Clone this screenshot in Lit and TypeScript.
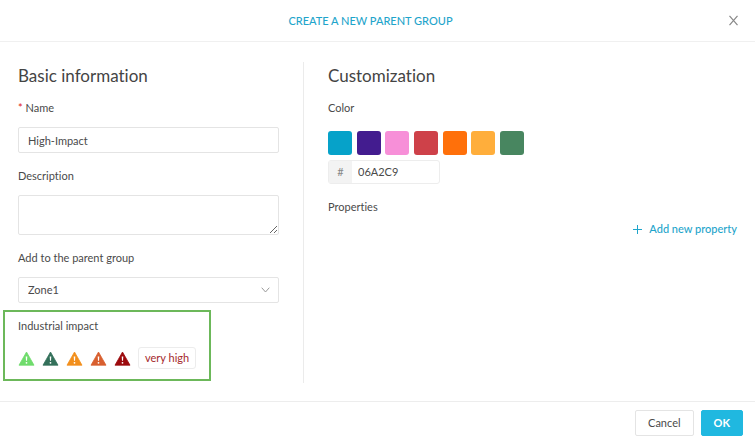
import { LitElement, html, css, svg } from "lit";
import { customElement, state } from "lit/decorators.js";
import { styleMap } from "lit/directives/style-map.js";

const SWATCHES = [
  { name: "Blue", hex: "06A2C9" },
  { name: "Indigo", hex: "431C8F" },
  { name: "Pink", hex: "F78FD8" },
  { name: "Red", hex: "CE4149" },
  { name: "Orange", hex: "FF700A" },
  { name: "Amber", hex: "FFAE3B" },
  { name: "Green", hex: "488660" },
];

const IMPACTS = [
  { name: "very low", color: "#6fdc6c" },
  { name: "low", color: "#33705a" },
  { name: "medium", color: "#f28f1c" },
  { name: "high", color: "#d85f2f" },
  { name: "very high", color: "#9c0a0d" },
];

const warning = svg`
  <path d="M8.5 1 L16 14.2 H1 Z" fill="currentColor" stroke="currentColor" stroke-width="0.8" stroke-linejoin="round"/>
  <path d="M7.7 5.6 H9.3 L9 9.8 H8 Z" fill="#fff"/>
  <circle cx="8.5" cy="11.8" r="0.9" fill="#fff"/>`;

@customElement("app-root")
export class AppRoot extends LitElement {
  @state() private color = "06A2C9";
  @state() private impact = "very high";

  static styles = css`
    :host {
      display: flex;
      flex-direction: column;
      min-height: 100vh;
      background: #fff;
      color: #4a4a4a;
      font: 11px/18px Lato, "Liberation Sans", sans-serif;
      font-variant-ligatures: none;
    }
    *, *::before, *::after { box-sizing: border-box; }
    button, input, textarea, select { font: inherit; color: inherit; margin: 0; }
    button { cursor: pointer; padding: 0; }
    .header {
      display: grid;
      grid-template-columns: 1fr auto 1fr;
      align-items: center;
      height: 42px;
      padding: 0 16px;
      border-bottom: 1px solid #f0f0f0;
    }
    .title {
      grid-column: 2;
      margin: 0;
      padding-right: 14px;
      font-size: 11px;
      line-height: 18px;
      font-weight: 500;
      color: #1fa5cb;
    }
    .close {
      justify-self: end;
      display: flex;
      border: 0;
      background: none;
      color: #888;
    }
    .body {
      flex: 1;
      display: grid;
      grid-template-columns: 286fr 433fr;
      padding: 20px 18px 18px;
    }
    .basic { padding-right: 24px; border-right: 1px solid #ebebeb; }
    .custom { padding-left: 24px; }
    .heading {
      margin: 2px 0 11px;
      font-size: 17px;
      line-height: 24px;
      font-weight: 400;
      color: #444;
    }
    .field { display: flex; flex-direction: column; gap: 10px; margin-bottom: 14px; }
    .required { color: #e02020; }
    .control {
      width: 100%;
      height: 26px;
      padding: 0 9px;
      border: 1px solid #e4e4e4;
      border-radius: 2px;
      background: #fff;
      outline: none;
    }
    .area { display: block; height: 40px; resize: vertical; }
    .select-wrap { display: grid; align-items: center; }
    .select-wrap > * { grid-area: 1 / 1; }
    .select { appearance: none; }
    .chevron { justify-self: end; margin-right: 9px; pointer-events: none; }
    .impact {
      width: fit-content;
      margin: -7px 0 0 -15px;
      padding: 5px 13px 10px;
      border: 2px solid #6cb85a;
      display: flex;
      flex-direction: column;
      gap: 12px;
    }
    .levels { display: flex; align-items: center; gap: 7px; }
    .level { display: flex; border: 0; background: none; }
    .chip {
      padding: 1px 6px;
      border: 1px solid #ececec;
      border-radius: 3px;
      color: #a52a2d;
    }
    .swatches {
      display: flex;
      justify-content: space-between;
      max-width: 196px;
      margin: 14px 0 5px;
    }
    .swatch { width: 24px; height: 24px; border: 0; border-radius: 3px; }
    .hex { display: flex; width: 112px; height: 24px; border: 1px solid #ededed; border-radius: 3px; }
    .hash {
      flex: none;
      width: 23px;
      line-height: 22px;
      text-align: center;
      background: #f3f3f3;
      color: #888;
    }
    .hex-input { flex: 1; min-width: 0; border: 0; padding: 0 6px; background: none; outline: none; }
    .props { margin-top: 14px; }
    .add {
      display: flex;
      align-items: center;
      gap: 7px;
      margin: 4px 0 0 auto;
      border: 0;
      background: none;
      color: #1fa5cb;
      font-weight: 500;
    }
    .footer {
      display: flex;
      justify-content: flex-end;
      gap: 7px;
      padding: 8px 12px;
      border-top: 1px solid #ededed;
    }
    .btn { height: 26px; padding: 0 12px; border: 1px solid #e4e4e4; border-radius: 2px; background: #fff; }
    .ok { border-color: #20b8e0; background: #20b8e0; color: #fff; font-weight: 700; }
  `;

  render() {
    return html`
      <header class="header">
        <h1 class="title">CREATE A NEW PARENT GROUP</h1>
        <button class="close" aria-label="Close">
          <svg width="11" height="11" viewBox="0 0 11 11" fill="none" stroke="currentColor" stroke-width="1.2">
            <path d="M1.5 0.8 L9.5 10.2 M9.5 0.8 L1.5 10.2" />
          </svg>
        </button>
      </header>
      <main class="body">
        <section class="basic">
          <h2 class="heading">Basic information</h2>
          <div class="field">
            <label for="name"><span class="required">*</span> Name</label>
            <input class="control" id="name" required value="High-Impact" />
          </div>
          <div class="field">
            <label for="description">Description</label>
            <textarea class="control area" id="description"></textarea>
          </div>
          <div class="field">
            <label for="parent">Add to the parent group</label>
            <div class="select-wrap">
              <select class="control select" id="parent"><option>Zone1</option></select>
              <svg class="chevron" width="9" height="6" viewBox="0 0 9 6" fill="none" stroke="#999">
                <path d="M0.7 0.7 L4.5 5 L8.3 0.7" />
              </svg>
            </div>
          </div>
          <div class="impact" role="group" aria-labelledby="impact-label">
            <span id="impact-label">Industrial impact</span>
            <div class="levels">
              ${IMPACTS.map((i) => html`
                <button class="level" aria-label=${i.name} style=${styleMap({ color: i.color })}
                  @click=${() => (this.impact = i.name)}>
                  <svg width="17" height="15" viewBox="0 0 17 15">${warning}</svg>
                </button>`)}
              <span class="chip">${this.impact}</span>
            </div>
          </div>
        </section>
        <section class="custom">
          <h2 class="heading">Customization</h2>
          <label for="hex">Color</label>
          <div class="swatches">
            ${SWATCHES.map((s) => html`
              <button class="swatch" aria-label=${s.name} style=${styleMap({ background: "#" + s.hex })}
                @click=${() => (this.color = s.hex)}></button>`)}
          </div>
          <div class="hex">
            <span class="hash">#</span>
            <input class="hex-input" id="hex" .value=${this.color} />
          </div>
          <div class="props">Properties</div>
          <button class="add">
            <svg width="9" height="9" viewBox="0 0 9 9" stroke="currentColor"><path d="M4.5 0 V9 M0 4.5 H9" /></svg>
            Add new property
          </button>
        </section>
      </main>
      <footer class="footer">
        <button class="btn">Cancel</button>
        <button class="btn ok">OK</button>
      </footer>
    `;
  }
}
